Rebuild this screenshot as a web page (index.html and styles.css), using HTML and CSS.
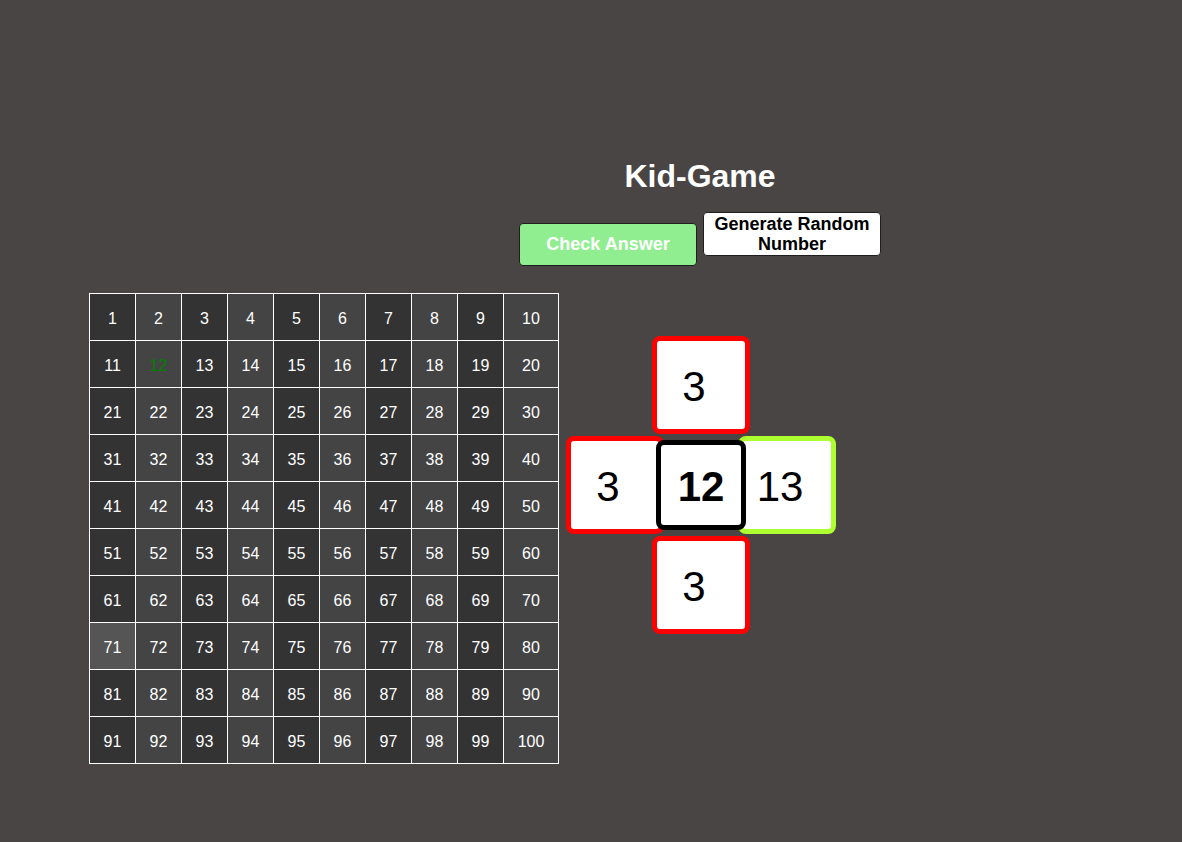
FILE: index.html
```html
<!DOCTYPE html>
<html>
<head>
<meta charset="utf-8">
<title>Kid-Game</title>
<link rel="stylesheet" href="styles.css">
</head>
<body>
<div class="page">
  <header class="header">
    <h1 class="title">Kid-Game</h1>
    <div class="actions">
      <button class="btn btn-check">Check Answer</button>
      <button class="btn btn-generate">Generate Random Number</button>
    </div>
  </header>
  <main class="game">
    <table class="board">
      <tbody>
        <tr><td>1</td><td>2</td><td>3</td><td>4</td><td>5</td><td>6</td><td>7</td><td>8</td><td>9</td><td>10</td></tr>
        <tr><td>11</td><td class="target">12</td><td>13</td><td>14</td><td>15</td><td>16</td><td>17</td><td>18</td><td>19</td><td>20</td></tr>
        <tr><td>21</td><td>22</td><td>23</td><td>24</td><td>25</td><td>26</td><td>27</td><td>28</td><td>29</td><td>30</td></tr>
        <tr><td>31</td><td>32</td><td>33</td><td>34</td><td>35</td><td>36</td><td>37</td><td>38</td><td>39</td><td>40</td></tr>
        <tr><td>41</td><td>42</td><td>43</td><td>44</td><td>45</td><td>46</td><td>47</td><td>48</td><td>49</td><td>50</td></tr>
        <tr><td>51</td><td>52</td><td>53</td><td>54</td><td>55</td><td>56</td><td>57</td><td>58</td><td>59</td><td>60</td></tr>
        <tr><td>61</td><td>62</td><td>63</td><td>64</td><td>65</td><td>66</td><td>67</td><td>68</td><td>69</td><td>70</td></tr>
        <tr><td class="hover">71</td><td>72</td><td>73</td><td>74</td><td>75</td><td>76</td><td>77</td><td>78</td><td>79</td><td>80</td></tr>
        <tr><td>81</td><td>82</td><td>83</td><td>84</td><td>85</td><td>86</td><td>87</td><td>88</td><td>89</td><td>90</td></tr>
        <tr><td>91</td><td>92</td><td>93</td><td>94</td><td>95</td><td>96</td><td>97</td><td>98</td><td>99</td><td>100</td></tr>
      </tbody>
    </table>
    <div class="cross">
      <div class="tile tile-top wrong">3</div>
      <div class="tile tile-left wrong">3</div>
      <div class="tile tile-center">12</div>
      <div class="tile tile-right right">13</div>
      <div class="tile tile-bottom wrong">3</div>
    </div>
  </main>
</div>
</body>
</html>
```
FILE: styles.css
```css
html, body {
  margin: 0;
  padding: 0;
}
body {
  background: #4a4545;
  font-family: "Liberation Sans", Arial, sans-serif;
  color: #fff;
  width: 1182px;
  height: 842px;
  overflow: hidden;
}
.page {
  padding-top: 158px;
}
.header {
  margin-left: 400px;
  width: 600px;
  display: flex;
  flex-direction: column;
  align-items: center;
}
.title {
  margin: 0;
  font-size: 32px;
  line-height: 37px;
  font-weight: bold;
  color: #fff;
}
.actions {
  margin-top: 17px;
  display: flex;
  align-items: flex-start;
  gap: 6px;
}
.btn {
  font-family: "Liberation Sans", Arial, sans-serif;
  font-size: 18px;
  font-weight: bold;
  line-height: 20.5px;
  width: 178px;
  border-radius: 4px;
  cursor: pointer;
}
.btn-check {
  margin-top: 11px;
  height: 43px;
  padding: 0 6px;
  background: #90ee90;
  color: #fff;
  border: 1px solid #1e1e1e;
}
.btn-generate {
  height: 44px;
  padding: 0 6px;
  background: #fff;
  color: #000;
  border: 1px solid #1e1e1e;
}
.game {
  margin-top: 27px;
  padding-left: 89px;
  display: flex;
  align-items: flex-start;
  gap: 7px;
}
.board {
  border-collapse: collapse;
  font-size: 16px;
}
.board td {
  border: 1px solid #fff;
  width: 46px;
  height: 47px;
  padding: 3px 0 0;
  box-sizing: border-box;
  text-align: center;
  vertical-align: middle;
  color: #fff;
  background: #333;
}
.board td:nth-child(even) {
  background: #444;
}
.board td:last-child {
  width: 55px;
}
.board td.target {
  color: #008000;
}
.board td.hover {
  background: #555;
}
.cross {
  margin-top: 43px;
  display: grid;
  grid-template-columns: 86px 12px 74px 12px 86px;
  grid-template-rows: 98px 98px 98px;
  row-gap: 2px;
}
.tile {
  box-sizing: border-box;
  width: 98px;
  height: 98px;
  background: #fff;
  border: 5px solid;
  border-radius: 8px;
  color: #000;
  font-size: 42px;
  display: flex;
  align-items: center;
  justify-content: center;
  padding: 3px 14px 0 0;
}
.wrong {
  border-color: #ff0000;
}
.right {
  border-color: #adff2f;
}
.tile-top {
  grid-column: 2 / 5;
  grid-row: 1;
}
.tile-left {
  grid-column: 1 / 3;
  grid-row: 2;
}
.tile-right {
  grid-column: 4 / 6;
  grid-row: 2;
}
.tile-bottom {
  grid-column: 2 / 5;
  grid-row: 3;
}
.tile-center {
  grid-column: 2 / 5;
  grid-row: 2;
  justify-self: center;
  align-self: center;
  width: 90px;
  height: 90px;
  padding: 3px 0 0;
  border-color: #000;
  font-weight: bold;
  z-index: 1;
}
```
